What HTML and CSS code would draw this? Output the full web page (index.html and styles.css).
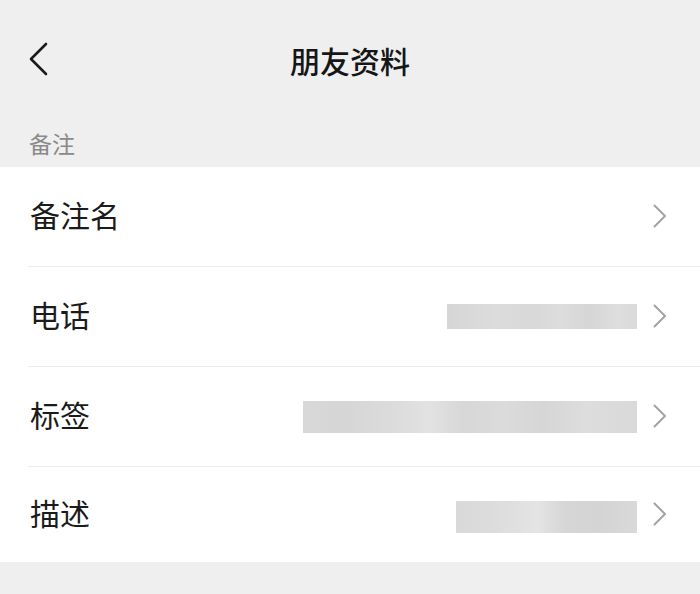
FILE: index.html
```html
<!DOCTYPE html>
<html lang="zh-CN">
<head>
<meta charset="utf-8">
<title>朋友资料</title>
<link rel="stylesheet" href="styles.css">
</head>
<body>
<div class="page">
  <header class="nav">
    <button class="back" aria-label="返回">
      <svg width="22" height="34" viewBox="0 0 22 34"><path d="M19 2 L4 17 L19 32" fill="none" stroke="#1b1b1b" stroke-width="2.6" stroke-linecap="round" stroke-linejoin="round"/></svg>
    </button>
    <h1 class="title">朋友资料</h1>
  </header>
  <div class="section-label">备注</div>
  <ul class="list">
    <li class="row">
      <span class="label">备注名</span>
      <span class="value"></span>
      <svg class="chev" width="16" height="26" viewBox="0 0 16 26"><path d="M2.5 2.5 L13 13 L2.5 23.5" fill="none" stroke="#a3a3a3" stroke-width="2" stroke-linecap="round" stroke-linejoin="round"/></svg>
    </li>
    <li class="row">
      <span class="label">电话</span>
      <span class="value"><span class="blur blur-phone"></span></span>
      <svg class="chev" width="16" height="26" viewBox="0 0 16 26"><path d="M2.5 2.5 L13 13 L2.5 23.5" fill="none" stroke="#a3a3a3" stroke-width="2" stroke-linecap="round" stroke-linejoin="round"/></svg>
    </li>
    <li class="row">
      <span class="label">标签</span>
      <span class="value"><span class="blur blur-tag"></span></span>
      <svg class="chev" width="16" height="26" viewBox="0 0 16 26"><path d="M2.5 2.5 L13 13 L2.5 23.5" fill="none" stroke="#a3a3a3" stroke-width="2" stroke-linecap="round" stroke-linejoin="round"/></svg>
    </li>
    <li class="row row-last">
      <span class="label">描述</span>
      <span class="value"><span class="blur blur-desc"></span></span>
      <svg class="chev" width="16" height="26" viewBox="0 0 16 26"><path d="M2.5 2.5 L13 13 L2.5 23.5" fill="none" stroke="#a3a3a3" stroke-width="2" stroke-linecap="round" stroke-linejoin="round"/></svg>
    </li>
  </ul>
</div>
</body>
</html>
```

FILE: styles.css
```css
* { box-sizing: border-box; }
html, body {
  margin: 0;
  padding: 0;
  background: #efefef;
}
body {
  font-family: "Noto Sans CJK SC", "Noto Sans", sans-serif;
  color: #1b1b1b;
}
.page {
  width: 700px;
  height: 594px;
  overflow: hidden;
  background: #efefef;
}
.nav {
  position: relative;
  height: 120px;
  display: flex;
  align-items: center;
  justify-content: center;
}
.back {
  position: absolute;
  left: 27px;
  top: 42px;
  border: 0;
  background: none;
  padding: 0;
  display: flex;
}
.title {
  margin: 0;
  font-size: 30px;
  font-weight: 500;
  line-height: 40px;
  color: #161616;
  letter-spacing: 0;
}
.section-label {
  height: 47px;
  padding: 10px 0 0 29px;
  font-size: 23px;
  line-height: 26px;
  color: #8a8a8a;
}
.list {
  list-style: none;
  margin: 0;
  padding: 0 0 0 28px;
  background: #fff;
}
.row {
  height: 100px;
  display: flex;
  align-items: center;
  padding-right: 32px;
  border-bottom: 1px solid #ececec;
}
.row-last {
  height: 95px;
  border-bottom: 0;
}
.label {
  padding-left: 2px;
  font-size: 30px;
  line-height: 40px;
  color: #1b1b1b;
  margin-top: -5px;
}
.value {
  flex: 1;
  display: flex;
  justify-content: flex-end;
  margin-right: 15px;
}
.chev {
  flex: none;
  margin-top: -2px;
}
.blur {
  display: block;
  background: #d9d9d9;
}
.blur-phone {
  width: 190px;
  height: 25px;
  background: linear-gradient(90deg, #d6d6d6 0%, #dcdcdc 25%, #d8d8d8 45%, #dddddd 60%, #d6d6d6 75%, #dedede 90%, #dadada 100%);
}
.blur-tag {
  width: 334px;
  height: 32px;
  background: linear-gradient(90deg, #d8d8d8 0%, #d6d6d6 12%, #dcdcdc 28%, #e2e2e2 38%, #d7d7d7 48%, #dbdbdb 60%, #d6d6d6 72%, #dddddd 85%, #d9d9d9 100%);
}
.blur-desc {
  width: 181px;
  height: 32px;
  margin-top: 4px;
  background: linear-gradient(90deg, #d9d9d9 0%, #dcdcdc 20%, #e4e4e4 45%, #d6d6d6 60%, #d4d4d4 78%, #d9d9d9 100%);
}
```
